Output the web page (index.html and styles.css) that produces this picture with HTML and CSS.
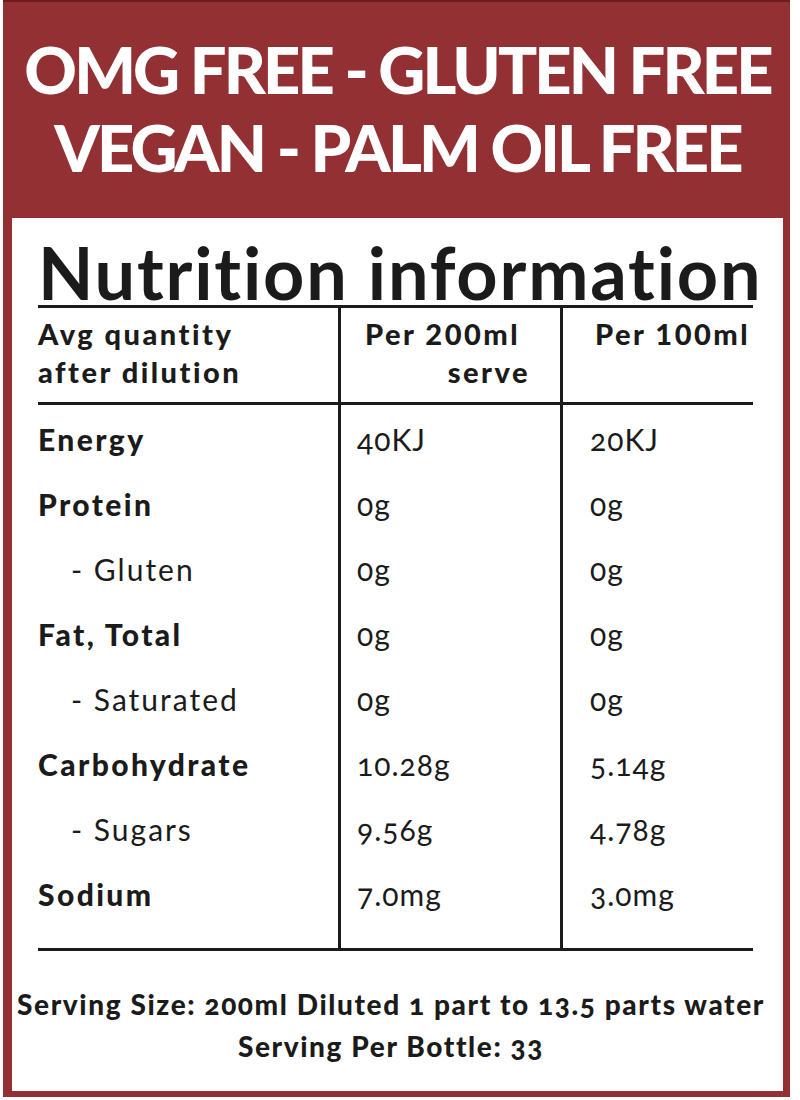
FILE: index.html
```html
<!DOCTYPE html>
<html lang="en">
<head>
<meta charset="utf-8">
<title>Nutrition information</title>
<link rel="stylesheet" href="styles.css">
</head>
<body>
<div class="label">
  <header class="banner">
    <div class="banner-line">OMG FREE - GLUTEN FREE</div>
    <div class="banner-line">VEGAN - PALM OIL FREE</div>
  </header>
  <section class="panel">
    <h1 class="title">Nutrition information</h1>
    <div class="table">
      <div class="cell head c1"><span class="hl">Avg quantity</span><span class="hl">after dilution</span></div>
      <div class="cell head c2"><span class="hl per">Per 200ml</span><span class="hl serve">serve</span></div>
      <div class="cell head c3"><span class="hl">Per 100ml</span></div>

      <div class="body c1">
        <div class="row strong">Energy</div>
        <div class="row strong">Protein</div>
        <div class="row sub">- Gluten</div>
        <div class="row strong">Fat, Total</div>
        <div class="row sub">- Saturated</div>
        <div class="row strong">Carbohydrate</div>
        <div class="row sub">- Sugars</div>
        <div class="row strong">Sodium</div>
      </div>
      <div class="body c2 num">
        <div class="row">40KJ</div>
        <div class="row">0g</div>
        <div class="row">0g</div>
        <div class="row">0g</div>
        <div class="row">0g</div>
        <div class="row">10.28g</div>
        <div class="row">9.56g</div>
        <div class="row">7.0mg</div>
      </div>
      <div class="body c3 num">
        <div class="row">20KJ</div>
        <div class="row">0g</div>
        <div class="row">0g</div>
        <div class="row">0g</div>
        <div class="row">0g</div>
        <div class="row">5.14g</div>
        <div class="row">4.78g</div>
        <div class="row">3.0mg</div>
      </div>
    </div>
    <footer class="serving">
      <div class="serving-line">Serving Size: 200ml Diluted 1 part to 13.5 parts water</div>
      <div class="serving-line">Serving Per Bottle: 33</div>
    </footer>
  </section>
</div>
</body>
</html>
```

FILE: styles.css
```css
html, body {
  margin: 0;
  padding: 0;
  background: #ffffff;
}

body {
  font-family: Lato, "Open Sans", sans-serif;
  color: #1b1b1b;
  font-variant-ligatures: none;
}

.label {
  margin-left: 3px;
  width: 787px;
  background: #923034;
  border-top: 2px solid #6f1c20;
  padding: 0 7px 6px 9px;
  box-sizing: border-box;
}

.banner {
  padding: 28px 0 32px;
  text-align: center;
  color: #ffffff;
  font-weight: 900;
  font-size: 65px;
  line-height: 78px;
  letter-spacing: -2.9px;
}

.banner-line {
  white-space: nowrap;
}

.panel {
  background: #ffffff;
  padding: 21px 30px 24px 26px;
}

.title {
  margin: 0;
  font-size: 72px;
  line-height: 66px;
  font-weight: 700;
  letter-spacing: 1.8px;
  white-space: nowrap;
  color: #1b1b1b;
}

.table {
  display: grid;
  grid-template-columns: 300px 222px 193px;
  border-top: 3px solid #1b1b1b;
  border-bottom: 3px solid #1b1b1b;
}

.cell.head {
  font-weight: 900;
  font-size: 29px;
  line-height: 38px;
  letter-spacing: 2.5px;
  padding: 7px 0 11px;
  border-bottom: 3px solid #1b1b1b;
  display: flex;
  flex-direction: column;
}

.c2, .c3 {
  border-left: 3px solid #1b1b1b;
}

.head.c2 {
  padding-left: 24px;
  align-items: flex-start;
}

.head.c2 .serve {
  align-self: flex-end;
  margin-right: 30px;
}

.head.c3 {
  padding-left: 32px;
}

.body {
  padding: 2px 0 21px;
  font-size: 30px;
  letter-spacing: 2px;
}

.row {
  line-height: 65px;
  white-space: nowrap;
}

.strong {
  font-weight: 900;
  letter-spacing: 2.4px;
}

.sub {
  padding-left: 33px;
}

.num {
  font-variant-numeric: oldstyle-nums;
  letter-spacing: 1px;
}

.body.c2 {
  padding-left: 16px;
}

.body.c3 {
  padding-left: 27px;
}

.serving {
  margin-top: 32px;
  margin-left: -22px;
  margin-right: -13px;
  text-align: center;
  font-weight: 900;
  font-size: 28px;
  line-height: 42px;
  letter-spacing: 1.6px;
  font-variant-numeric: oldstyle-nums;
}

.serving-line {
  white-space: nowrap;
}
```
